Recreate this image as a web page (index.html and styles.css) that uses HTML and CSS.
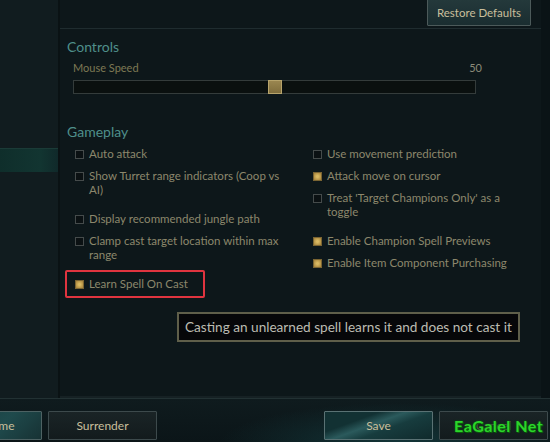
FILE: index.html
```html
<!DOCTYPE html>
<html lang="en">
<head>
  <meta charset="UTF-8">
  <title>Options - Game</title>
  <link rel="stylesheet" href="styles.css">
</head>
<body>
  <div class="screen">
    <div class="main">
      <nav class="sidebar">
        <div class="nav-item"></div>
        <div class="nav-item active"></div>
      </nav>

      <section class="panel">
        <header class="panel-header">
          <button class="button restore">Restore Defaults</button>
        </header>

        <div class="panel-body">
          <h2>Controls</h2>
          <div class="slider-label">
            <span>Mouse Speed</span>
            <span class="value">50</span>
          </div>
          <div class="slider">
            <div class="thumb" style="left: 48.4%"></div>
          </div>

          <h2 class="gameplay">Gameplay</h2>
          <div class="options">
            <div class="column">
              <label class="option"><span class="box"></span>Auto attack</label>
              <label class="option tall"><span class="box"></span>Show Turret range indicators (Coop vs AI)</label>
              <label class="option"><span class="box"></span>Display recommended jungle path</label>
              <label class="option tall"><span class="box"></span>Clamp cast target location within max range</label>
              <label class="option highlight"><span class="box checked"></span>Learn Spell On Cast</label>
            </div>
            <div class="column right">
              <label class="option"><span class="box"></span>Use movement prediction</label>
              <label class="option"><span class="box checked"></span>Attack move on cursor</label>
              <label class="option tall"><span class="box"></span>Treat 'Target Champions Only' as a toggle</label>
              <label class="option"><span class="box checked"></span>Enable Champion Spell Previews</label>
              <label class="option"><span class="box checked"></span>Enable Item Component Purchasing</label>
            </div>
          </div>

          <div class="tooltip">Casting an unlearned spell learns it and does not cast it</div>
        </div>
      </section>
      <div class="edge"></div>
    </div>

    <footer class="actions">
      <button class="button exit">Exit Game</button>
      <button class="button">Surrender</button>
      <div class="spacer"></div>
      <button class="button save">Save</button>
      <button class="button cancel"><span class="label">Cancel</span><span class="watermark">EaGalel Net</span></button>
    </footer>
  </div>
</body>
</html>
```

FILE: styles.css
```css
:root {
  --bg: #0d171a;
  --sidebar: #111c1f;
  --line: #1f2c2f;
  --teal: #4f8f8b;
  --label: #8c876c;
  --gold: #b8974c;
  --button-text: #c9bf9c;
}

* {
  box-sizing: border-box;
}

body {
  margin: 0;
  background-color: var(--bg);
  font-family: 'Lato', 'Open Sans', sans-serif;
  color: var(--label);
}

.screen {
  width: 550px;
  height: 442px;
  display: flex;
  flex-direction: column;
  overflow: hidden;
}

.main {
  display: flex;
  height: 398px;
}

.sidebar {
  width: 60px;
  flex: none;
  background-color: var(--sidebar);
  border-right: 2px solid #0a1214;
  padding-top: 148px;
}

.nav-item.active {
  height: 24px;
  background: linear-gradient(90deg, #0f2e2b, #123531 70%, #10292a);
  border-top: 1px solid #1b3b37;
}

.nav-item:first-child {
  display: none;
}

.panel {
  width: 481px;
  flex: none;
  background-color: var(--bg);
  border-bottom: 2px solid #162124;
  position: relative;
}

.edge {
  flex: 1;
  background-color: #0a1316;
}

.panel-header {
  height: 29px;
  border-bottom: 1px solid var(--line);
  display: flex;
  justify-content: flex-end;
  padding-right: 10px;
}

.button {
  font-family: 'Lato', 'Open Sans', sans-serif;
  font-size: 12px;
  color: var(--button-text);
  background: linear-gradient(180deg, #1a2426, #131b1d);
  border: 1px solid #3d4a4c;
  border-radius: 1px;
  padding: 0;
  cursor: pointer;
}

.restore {
  width: 104px;
  height: 27px;
  margin-top: -1px;
  font-size: 11.5px;
  background: linear-gradient(180deg, #24393b, #1a2d30);
  border-color: #4c5a5a;
}

.panel-body {
  padding: 10px 0 0 7px;
}

h2 {
  margin: 0;
  font-size: 14px;
  line-height: 16px;
  font-weight: 400;
  color: var(--teal);
}

.slider-label {
  display: flex;
  justify-content: space-between;
  width: 409px;
  margin: 6px 0 5px 6px;
  font-size: 11px;
  line-height: 14px;
  color: #7d7954;
}

.slider-label .value {
  color: #8b8a78;
}

.slider {
  position: relative;
  width: 403px;
  height: 14px;
  margin-left: 6px;
  background-color: #0a100f;
  border: 1px solid #343c3b;
}

.thumb {
  position: absolute;
  top: -1px;
  width: 14px;
  height: 14px;
  background: linear-gradient(180deg, #9a8650, #7f6d3c);
  border: 1px solid #b7a46c;
}

.gameplay {
  margin-top: 30px;
}

.options {
  display: flex;
  margin: 7px 0 0 8px;
}

.column {
  width: 238px;
  padding-right: 28px;
  display: flex;
  flex-direction: column;
  align-items: flex-start;
}

.column.right {
  width: 215px;
  padding-right: 8px;
}

.option {
  display: flex;
  align-items: flex-start;
  gap: 5px;
  font-size: 11.5px;
  line-height: 14px;
  margin-bottom: 8px;
  color: var(--label);
}

.option.tall {
  margin-bottom: 15px;
}

.box {
  flex: none;
  width: 9px;
  height: 9px;
  margin-top: 3px;
  border: 1px solid #454b4b;
  background-color: #0b1113;
}

.box.checked {
  background: radial-gradient(circle, #d8b862 20%, #a8853c 90%);
  border-color: #7a6432;
}

.highlight {
  border: 2px solid #e0343f;
  border-radius: 2px;
  padding: 5px 15px 5px 8px;
  margin: -7px 0 0 -10px;
}

.tooltip {
  position: absolute;
  left: 117px;
  top: 312px;
  width: 343px;
  height: 30px;
  padding: 0 6px;
  background-color: #060709;
  border: 2px solid #5f5f4a;
  font-size: 13.6px;
  line-height: 26px;
  color: #bcbcb2;
  white-space: nowrap;
}

.actions {
  flex: 1;
  display: flex;
  gap: 6px;
  padding-top: 12px;
  background: radial-gradient(ellipse 180px 40px at 400px 44px, #133538, transparent),
    linear-gradient(180deg, #0f1b1e, #0b1518);
  border-top: 1px solid #223133;
}

.actions .button {
  width: 109px;
  height: 29px;
}

.exit {
  margin-left: -67px;
  background: linear-gradient(135deg, #173b3d, #1f4a4c 60%, #173234);
  border-color: #4d6263;
}

.spacer {
  flex: 1;
}

.save {
  background: linear-gradient(160deg, #123133 30%, #2b5a5c 45%, #173c3e 60%, #102a2c);
  border-color: #5a7274;
}

.cancel {
  position: relative;
  margin-right: 2px;
}

.cancel .label {
  opacity: 0.35;
}

.watermark {
  position: absolute;
  left: 14px;
  top: 4px;
  font-size: 16px;
  font-weight: 700;
  letter-spacing: 0.5px;
  color: #2bd42b;
  text-shadow: 0 0 2px #0b6b0b, 1px 1px 0 #0c5a0c;
  white-space: nowrap;
}
```
